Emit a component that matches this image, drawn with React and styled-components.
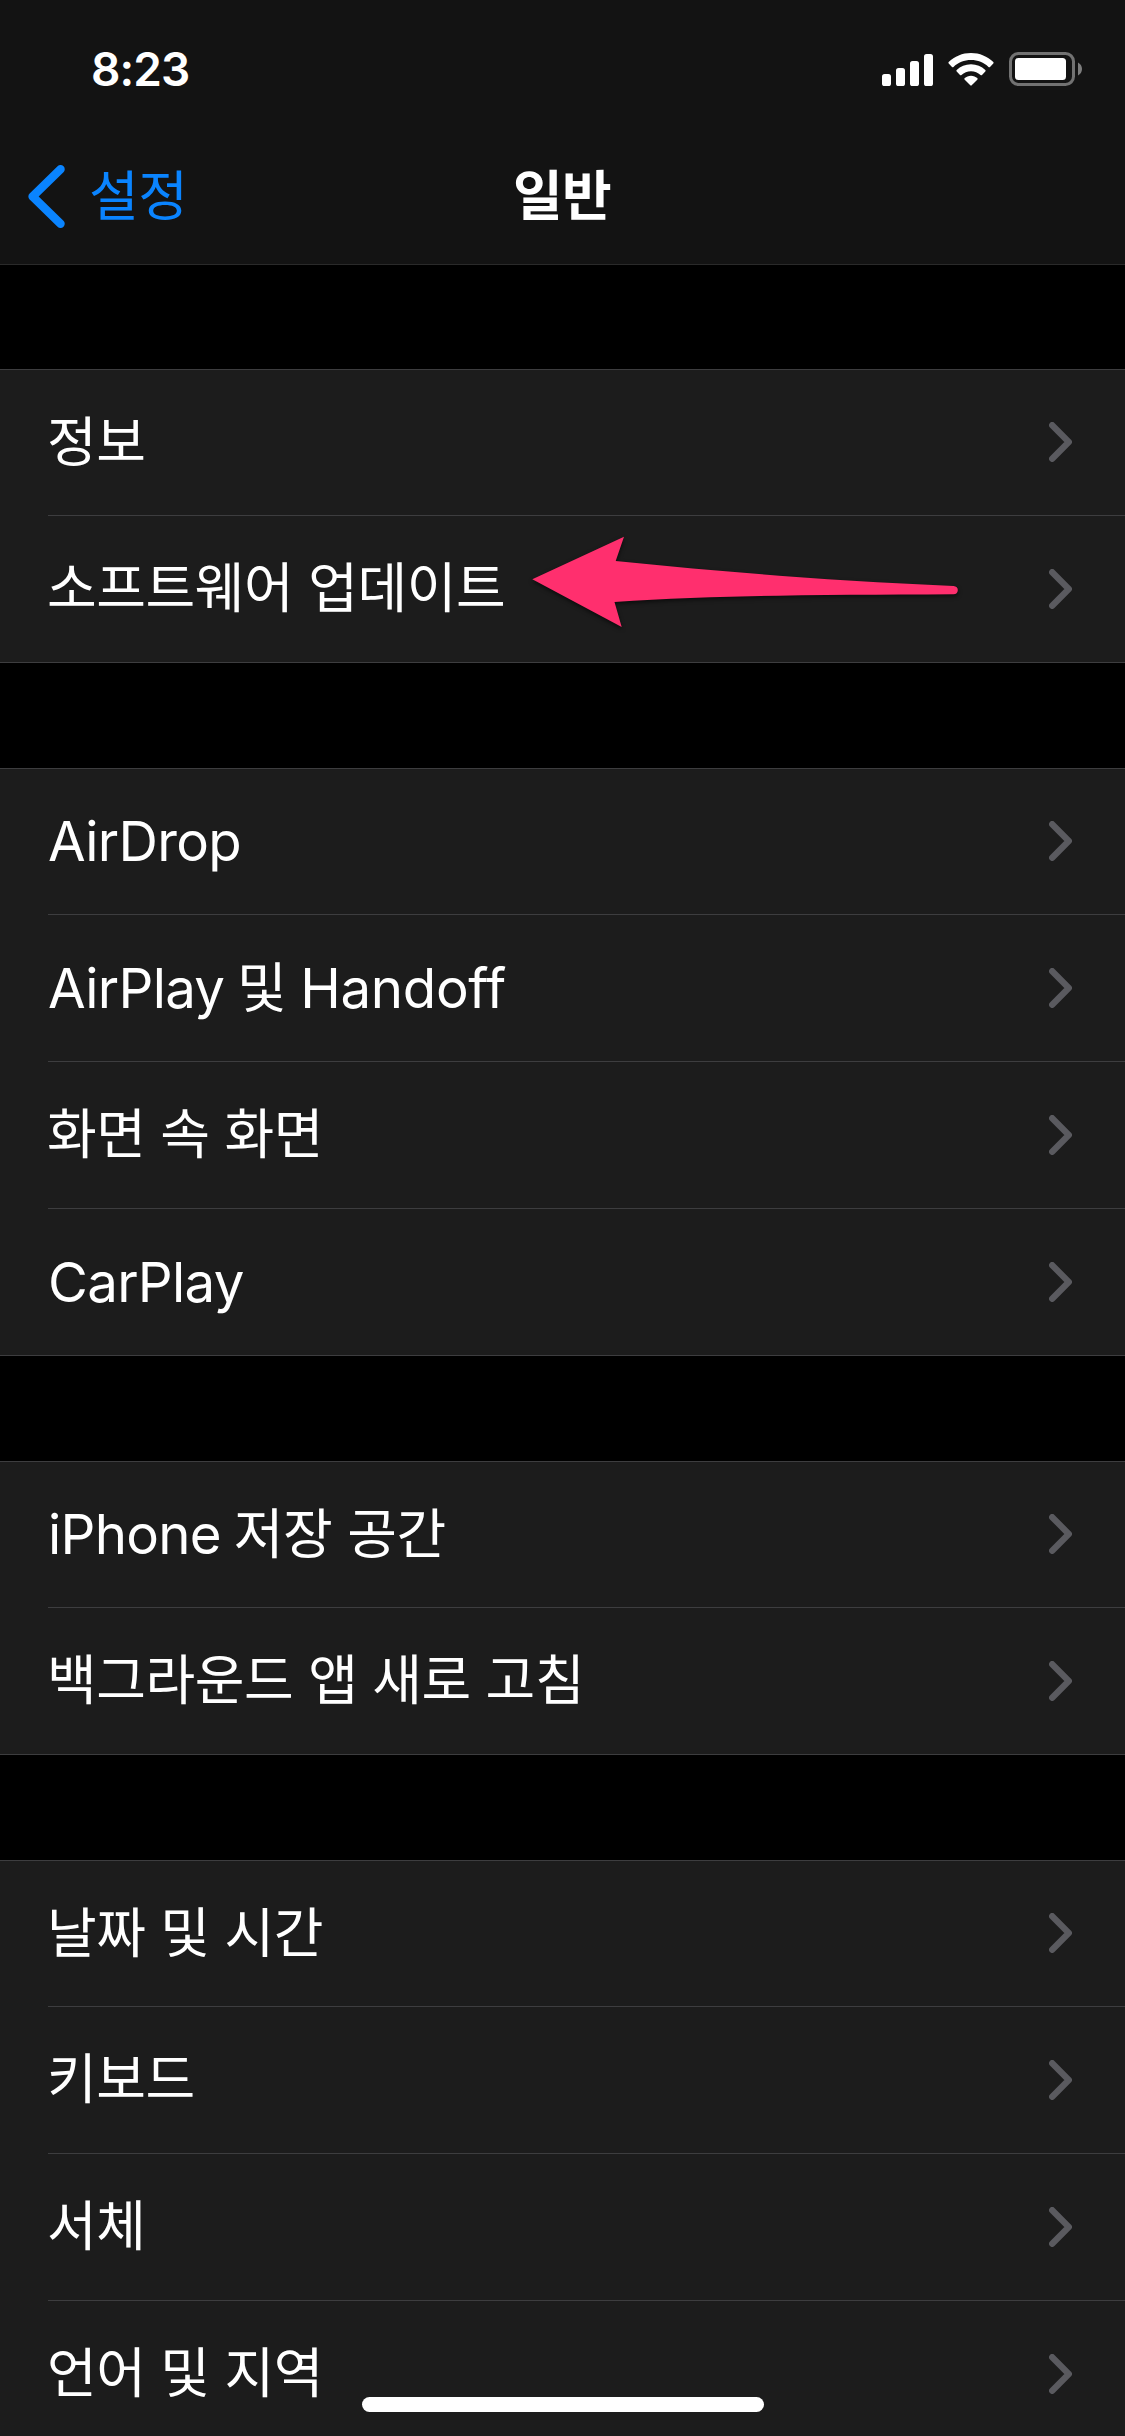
import React from "react";
import styled, { createGlobalStyle } from "styled-components";

const groups = [
  ["정보", "소프트웨어 업데이트"],
  ["AirDrop", "AirPlay 및 Handoff", "화면 속 화면", "CarPlay"],
  ["iPhone 저장 공간", "백그라운드 앱 새로 고침"],
  ["날짜 및 시간", "키보드", "서체", "언어 및 지역"],
];

const splitLatin = (text) => text.split(/([A-Za-z]+)/).filter(Boolean);

const SignalIcon = () => (
  <svg width="51" height="32" viewBox="0 0 51 32" fill="#fff">
    <rect x="0" y="20" width="9" height="12" rx="2.6" />
    <rect x="14" y="14" width="9" height="18" rx="2.6" />
    <rect x="28" y="7" width="9" height="25" rx="2.6" />
    <rect x="42" y="0" width="9" height="32" rx="2.6" />
  </svg>
);

const WifiIcon = () => (
  <svg width="46" height="33" viewBox="0 0 46 33" fill="#fff">
    <path d="M23 0C31.600 0 39.500 3.400 45.300 9Q46 9.800 45.300 10.600L42 13.900Q41.300 14.500 40.500 13.900C35.900 9.600 29.800 7 23 7S10.100 9.600 5.500 13.900Q4.700 14.500 4 13.900L.7 10.600Q0 9.800 .7 9C6.500 3.400 14.400 0 23 0Z" />
    <path d="M23 11.300C28.600 11.300 33.500 13.500 37.300 17Q38.100 17.800 37.300 18.600L34 21.900Q33.300 22.500 32.500 21.900C30 19.600 26.700 18.200 23 18.200S16 19.600 13.500 21.900Q12.700 22.500 12 21.900L8.700 18.600Q7.900 17.800 8.700 17C12.500 13.500 17.400 11.300 23 11.300Z" />
    <path d="M23 22.700C25.600 22.700 27.600 23.600 29.300 25.100Q30 25.900 29.300 26.700L23.700 32.300Q23 33 22.300 32.300L16.700 26.700Q16 25.900 16.700 25.100C18.400 23.600 20.400 22.700 23 22.700Z" />
  </svg>
);

const BatteryIcon = () => (
  <svg width="73" height="34" viewBox="0 0 73 34">
    <rect x="1.500" y="1.500" width="63" height="31" rx="8" fill="none" stroke="#727272" strokeWidth="3" />
    <rect x="6" y="6" width="51" height="22" rx="3.500" fill="#fff" />
    <path d="M69 10.500C71.400 11.800 73 14 73 17S71.400 22.200 69 23.500Z" fill="#7d7d7d" />
  </svg>
);

const BackIcon = () => (
  <svg width="37" height="63" viewBox="0 0 37 63" fill="none">
    <path
      d="M32.500 4.300L4.600 31.500L32.500 58.700"
      stroke="#0a84ff"
      strokeWidth="8.500"
      strokeLinecap="round"
      strokeLinejoin="round"
    />
  </svg>
);

const Chevron = () => (
  <ChevronSvg width="23" height="40" viewBox="0 0 23 40" fill="none">
    <path
      d="M3.200 3.200L19.800 20L3.200 36.800"
      stroke="#5a5a5f"
      strokeWidth="6.300"
      strokeLinecap="round"
      strokeLinejoin="round"
    />
  </ChevronSvg>
);

const Pointer = () => (
  <PointerSvg width="440" height="110" viewBox="0 0 440 110">
    <path
      d="M8.300 53.300L100 10.700L91.700 35C200 46 310 55 429.500 60Q434 60.500 433.800 64.300Q433.500 68.300 429.500 68.300C300 69 190 69 90.500 76L97.700 101Z"
      fill="#ff2f6e"
    />
  </PointerSvg>
);

const App = () => {
  return (
    <>
      <GlobalStyle />
      <Screen>
        <Header>
          <StatusBar>
            <Clock>8:23</Clock>
            <StatusIcons>
              <SignalIcon />
              <WifiIcon />
              <BatteryIcon />
            </StatusIcons>
          </StatusBar>
          <NavBar>
            <BackButton>
              <BackIcon />
              <BackLabel>설정</BackLabel>
            </BackButton>
            <Title>일반</Title>
          </NavBar>
        </Header>
        <Content>
          {groups.map((items) => (
            <Group key={items[0]}>
              {items.map((item) => (
                <Row key={item}>
                  <RowInner>
                    <Label>
                      {splitLatin(item).map((part, i) =>
                        /[A-Za-z]/.test(part) ? <Latin key={i}>{part}</Latin> : part
                      )}
                    </Label>
                    <Chevron />
                  </RowInner>
                  {item === "소프트웨어 업데이트" && <Pointer />}
                </Row>
              ))}
            </Group>
          ))}
        </Content>
        <HomeIndicator />
      </Screen>
    </>
  );
};

export default App;

const GlobalStyle = createGlobalStyle`
  body {
    margin: 0;
    background: #000;
    font-family: Inter, "Noto Sans CJK KR", sans-serif;
  }

  svg {
    display: block;
    flex-shrink: 0;
  }
`;

const Screen = styled.div`
  position: relative;
  width: 1125px;
  height: 2436px;
  overflow: hidden;
  background: #000;
  color: #fff;
`;

const Header = styled.header`
  height: 264px;
  background: #131313;
  border-bottom: 1px solid #2a2a2a;
`;

const StatusBar = styled.div`
  display: flex;
  justify-content: space-between;
  height: 132px;
  padding: 0 43px 0 91px;
`;

const Clock = styled.div`
  padding-top: 41px;
  font-size: 46px;
  line-height: 56px;
  font-weight: 600;
  letter-spacing: -0.9px;
`;

const StatusIcons = styled.div`
  display: flex;
  align-items: flex-end;
  gap: 15px;
  height: 86px;
`;

const NavBar = styled.nav`
  display: grid;
  grid-template-columns: 1fr auto 1fr;
  align-items: center;
  height: 129px;
`;

const BackButton = styled.div`
  display: flex;
  align-items: center;
  gap: 24px;
  padding-left: 28px;
`;

const BackLabel = styled.span`
  color: #0a84ff;
  font-size: 54px;
  line-height: 80px;
  letter-spacing: -0.5px;
`;

const Title = styled.h1`
  margin: 0 1px 0 0;
  font-size: 54px;
  line-height: 80px;
  font-weight: 600;
  letter-spacing: -0.8px;
`;

const Content = styled.main`
  display: flex;
  flex-direction: column;
  gap: 105px;
  padding-top: 104px;
`;

const Group = styled.section`
  background: #1c1c1c;
  border-top: 1px solid #3d3d3f;
  border-bottom: 1px solid #3d3d3f;
`;

const ChevronSvg = styled.svg`
  width: 23px;
  height: 40px;
`;

const Row = styled.div`
  position: relative;
  padding-left: 48px;

  &:first-child ${ChevronSvg} {
    margin-bottom: 1px;
  }
`;

const RowInner = styled.div`
  display: flex;
  align-items: center;
  justify-content: space-between;
  box-sizing: border-box;
  height: 147px;
  padding-right: 53px;
  border-bottom: 1px solid #3d3d3f;

  ${Row}:first-child & {
    height: 146px;
  }

  ${Row}:last-child & {
    height: 146px;
    border-bottom: none;
  }
`;

const Label = styled.span`
  margin-left: -1px;
  font-size: 54px;
  line-height: 80px;
  letter-spacing: -0.4px;
  white-space: nowrap;
`;

const Latin = styled.span`
  margin-right: -2px;
  font-size: 54.6px;
  letter-spacing: -0.7px;

  &:first-child {
    margin-left: 1px;
  }

  & + & {
    margin-left: -1px;
    letter-spacing: -0.3px;
  }
`;

const PointerSvg = styled.svg`
  position: absolute;
  top: 10px;
  left: 524px;
  filter: drop-shadow(0 2px 2px rgba(0, 0, 0, 0.6));
`;

const HomeIndicator = styled.div`
  position: absolute;
  left: 362px;
  bottom: 24px;
  width: 402px;
  height: 15px;
  border-radius: 8px;
  background: #fff;
`;
